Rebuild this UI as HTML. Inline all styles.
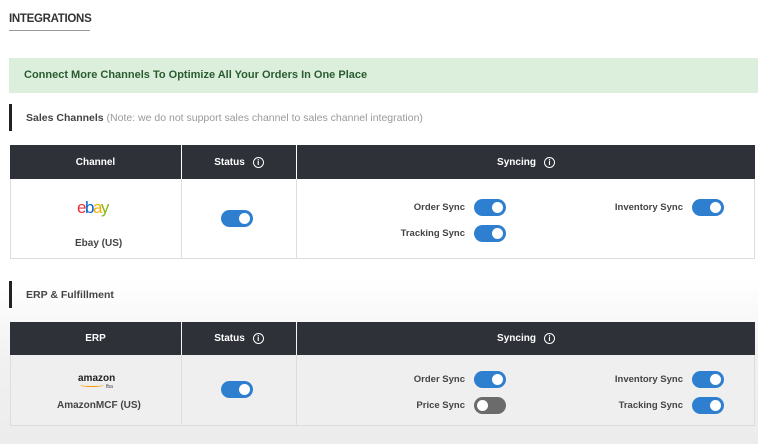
<!DOCTYPE html>
<html><head><style>
*{margin:0;padding:0;box-sizing:border-box}
body{width:758px;height:444px;overflow:hidden;font-family:"Liberation Sans",sans-serif;background:linear-gradient(#fff 0,#fff 280px,#f1f1f1 360px,#ececec 444px);position:relative;color:#333}
.a{position:absolute}
.b{font-weight:bold}
.tog{position:absolute;width:32px;height:17px;border-radius:9px;background:#2f7fd0}
.tog::after{content:"";position:absolute;right:3px;top:3px;width:11px;height:11px;border-radius:50%;background:#fff}
.tog.off{background:#6b6b6b}
.tog.off::after{left:3px;right:auto}
.hd{position:absolute;background:#2e3138;color:#fff;font-size:10px;font-weight:bold;display:flex;align-items:center;justify-content:center}
.info{display:inline-block;width:11px;height:11px;border:1.3px solid #fff;border-radius:50%;font-size:8px;line-height:9px;text-align:center;margin-left:8px;font-weight:bold}
.lbl{position:absolute;font-size:9.5px;font-weight:bold;color:#444;text-align:right}
</style></head><body>
<div class="a b" style="left:9px;top:13px;font-size:11.5px;color:#333;letter-spacing:-0.3px">INTEGRATIONS</div>
<div class="a" style="left:9px;top:30px;width:81px;height:1px;background:#999"></div>
<div class="a" style="left:9px;top:58px;width:749px;height:35px;background:#dbefdc"></div>
<div class="a b" style="left:24px;top:69px;font-size:11px;color:#2b5b30">Connect More Channels To Optimize All Your Orders In One Place</div>
<div class="a" style="left:9px;top:104px;width:3px;height:27px;background:#222"></div>
<div class="a" style="left:26px;top:112px;font-size:10.5px;color:#999"><b style="color:#444">Sales Channels</b> (Note: we do not support sales channel to sales channel integration)</div>

<div class="hd" style="left:10px;top:145px;width:171px;height:34px">Channel</div>
<div class="hd" style="left:182px;top:145px;width:114px;height:34px">Status<span class="info">i</span></div>
<div class="hd" style="left:297px;top:145px;width:458px;height:34px">Syncing<span class="info">i</span></div>
<div class="a" style="left:10px;top:179px;width:745px;height:80px;border:1px solid #ddd;border-top:0;background:#fff"></div>
<div class="a" style="left:181px;top:179px;width:1px;height:80px;background:#ddd"></div>
<div class="a" style="left:296px;top:179px;width:1px;height:80px;background:#ddd"></div>
<div class="a" style="left:77px;top:198px;font-size:17px;letter-spacing:-1.5px"><span style="color:#e53238">e</span><span style="color:#0064d2">b</span><span style="color:#f5af02">a</span><span style="color:#86b817">y</span></div>
<div class="a b" style="left:75px;top:238px;font-size:10px;color:#444">Ebay (US)</div>
<div class="tog" style="left:221px;top:210px"></div>
<div class="lbl" style="left:380px;top:202px;width:85px">Order Sync</div>
<div class="tog" style="left:474px;top:199px"></div>
<div class="lbl" style="left:380px;top:228px;width:85px">Tracking Sync</div>
<div class="tog" style="left:474px;top:225px"></div>
<div class="lbl" style="left:600px;top:202px;width:83px">Inventory Sync</div>
<div class="tog" style="left:692px;top:199px"></div>

<div class="a" style="left:9px;top:281px;width:3px;height:27px;background:#222"></div>
<div class="a b" style="left:26px;top:289px;font-size:10.5px;color:#444">ERP &amp; Fulfillment</div>

<div class="hd" style="left:10px;top:322px;width:171px;height:33px">ERP</div>
<div class="hd" style="left:182px;top:322px;width:114px;height:33px">Status<span class="info">i</span></div>
<div class="hd" style="left:297px;top:322px;width:458px;height:33px">Syncing<span class="info">i</span></div>
<div class="a" style="left:10px;top:355px;width:745px;height:71px;border:1px solid #ddd;border-top:0;background:#efefef"></div>
<div class="a" style="left:181px;top:355px;width:1px;height:71px;background:#ddd"></div>
<div class="a" style="left:296px;top:355px;width:1px;height:71px;background:#ddd"></div>
<div class="a b" style="left:78px;top:373px;font-size:10px;color:#222">amazon</div>
<div class="a" style="left:80px;top:383px;width:24px;height:4px;border-bottom:1.5px solid #f90;border-radius:0 0 50% 50%"></div>
<div class="a" style="left:106px;top:384px;font-size:5px;color:#444">fba</div>
<div class="a b" style="left:57px;top:400px;font-size:10px;color:#444">AmazonMCF (US)</div>
<div class="tog" style="left:221px;top:381px"></div>
<div class="lbl" style="left:380px;top:374px;width:85px">Order Sync</div>
<div class="tog" style="left:474px;top:371px"></div>
<div class="lbl" style="left:380px;top:400px;width:85px">Price Sync</div>
<div class="tog off" style="left:474px;top:397px"></div>
<div class="lbl" style="left:600px;top:374px;width:83px">Inventory Sync</div>
<div class="tog" style="left:692px;top:371px"></div>
<div class="lbl" style="left:600px;top:400px;width:83px">Tracking Sync</div>
<div class="tog" style="left:692px;top:397px"></div>
</body></html>
